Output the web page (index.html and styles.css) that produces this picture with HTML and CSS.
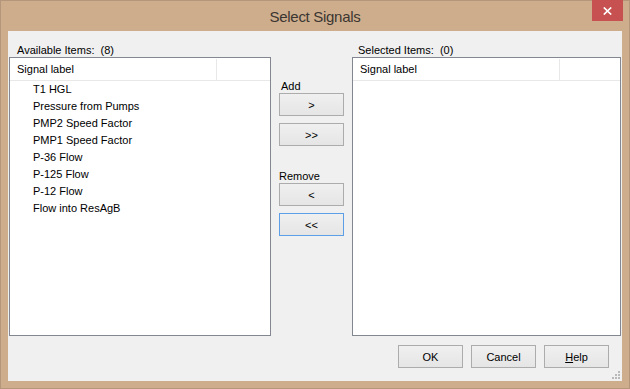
FILE: index.html
```html
<!DOCTYPE html>
<html lang="en">
<head>
    <meta charset="UTF-8">
    <meta name="viewport" content="width=device-width, initial-scale=1.0">
    <title>Select Signals</title>
    <link rel="stylesheet" href="styles.css">
</head>
<body>
    <div class="window">
        <div class="titlebar">
            <div class="title">Select Signals</div>
            <button class="close" aria-label="Close">
                <svg width="9" height="8" viewBox="0 0 9 8"><path d="M0.8 0.5L8.2 7.5M8.2 0.5L0.8 7.5" stroke="#fff" stroke-width="1.7"/></svg>
            </button>
        </div>
        <div class="client">
            <div class="panes">
                <div class="pane left">
                    <div class="pane-label">Available Items:&nbsp; (8)</div>
                    <div class="list">
                        <div class="list-header">
                            <span class="col-label">Signal label</span>
                            <span class="col-rest"></span>
                        </div>
                        <div class="list-body">
                            <div class="item">T1 HGL</div>
                            <div class="item">Pressure from Pumps</div>
                            <div class="item">PMP2 Speed Factor</div>
                            <div class="item">PMP1 Speed Factor</div>
                            <div class="item">P-36 Flow</div>
                            <div class="item">P-125 Flow</div>
                            <div class="item">P-12 Flow</div>
                            <div class="item">Flow into ResAgB</div>
                        </div>
                    </div>
                </div>
                <div class="middle">
                    <div class="group-label">Add</div>
                    <button class="btn">&gt;</button>
                    <button class="btn next">&gt;&gt;</button>
                    <div class="group-label remove">Remove</div>
                    <button class="btn">&lt;</button>
                    <button class="btn next focused">&lt;&lt;</button>
                </div>
                <div class="pane right">
                    <div class="pane-label">Selected Items:&nbsp; (0)</div>
                    <div class="list">
                        <div class="list-header">
                            <span class="col-label">Signal label</span>
                            <span class="col-rest"></span>
                        </div>
                        <div class="list-body"></div>
                    </div>
                </div>
            </div>
            <div class="footer">
                <button class="btn wide">OK</button>
                <button class="btn wide">Cancel</button>
                <button class="btn wide"><u>H</u>elp</button>
            </div>
            <svg class="grip" width="8" height="8" viewBox="0 0 8 8">
                <rect x="6" y="0" width="2" height="2"/>
                <rect x="3" y="3" width="2" height="2"/>
                <rect x="6" y="3" width="2" height="2"/>
                <rect x="0" y="6" width="2" height="2"/>
                <rect x="3" y="6" width="2" height="2"/>
                <rect x="6" y="6" width="2" height="2"/>
            </svg>
        </div>
    </div>
</body>
</html>
```

FILE: styles.css
```css
body {
    margin: 0;
    background-color: #cead8d;
    font-family: "Liberation Sans", Arial, sans-serif;
    font-size: 11px;
    color: #000;
    overflow: hidden;
}

.window {
    position: relative;
    width: 630px;
    height: 389px;
    box-sizing: border-box;
    border: 1px solid #b4967a;
    display: flex;
    flex-direction: column;
}

.titlebar {
    height: 30px;
    flex-shrink: 0;
    display: flex;
    align-items: center;
    justify-content: center;
}

.title {
    font-size: 15px;
    letter-spacing: -0.3px;
    color: #3b3631;
    padding-top: 1px;
}

.close {
    position: absolute;
    top: -1px;
    right: 6px;
    width: 31px;
    height: 21px;
    padding: 0;
    border: none;
    background-color: #c75050;
    display: flex;
    align-items: center;
    justify-content: center;
}

.client {
    position: relative;
    flex: 1;
    margin: 0 7px 7px;
    background-color: #f0f0f0;
    display: flex;
    flex-direction: column;
}

.panes {
    display: flex;
    gap: 8px;
    padding: 0 1px;
    height: 305px;
}

.pane {
    display: flex;
    flex-direction: column;
}

.pane.left {
    width: 262px;
}

.pane.right {
    width: 269px;
}

.pane-label {
    height: 26px;
    box-sizing: border-box;
    padding: 12px 0 0 8px;
    line-height: 14px;
    white-space: nowrap;
}

.pane.right .pane-label {
    padding-left: 6px;
}

.list {
    flex: 1;
    background-color: #fff;
    border: 1px solid #828790;
    display: flex;
    flex-direction: column;
}

.list-header {
    display: flex;
    height: 21px;
    padding-top: 1px;
    line-height: 21px;
    border-bottom: 1px solid #e8e8e8;
}

.col-label {
    width: 207px;
    box-sizing: border-box;
    padding-left: 7px;
    border-right: 1px solid #e8e8e8;
}

.item {
    line-height: 17px;
    padding-left: 23px;
    white-space: nowrap;
}

.middle {
    width: 65px;
    display: flex;
    flex-direction: column;
    padding-top: 48px;
}

.group-label {
    line-height: 14px;
    padding-left: 2px;
}

.group-label.remove {
    margin-top: 23px;
    padding-left: 0;
}

.btn {
    height: 23px;
    padding: 0;
    font-family: inherit;
    font-size: 11px;
    color: #000;
    background: linear-gradient(to bottom, #f0f0f0, #e5e5e5);
    border: 1px solid #acacac;
}

.btn.next {
    margin-top: 7px;
}

.btn.focused {
    border-color: #5d9fe6;
}

.footer {
    display: flex;
    justify-content: flex-end;
    gap: 8px;
    padding: 9px 13px 0 0;
}

.btn.wide {
    width: 65px;
}

.grip {
    position: absolute;
    right: 2px;
    bottom: 2px;
    fill: #b9b9b9;
}
```
